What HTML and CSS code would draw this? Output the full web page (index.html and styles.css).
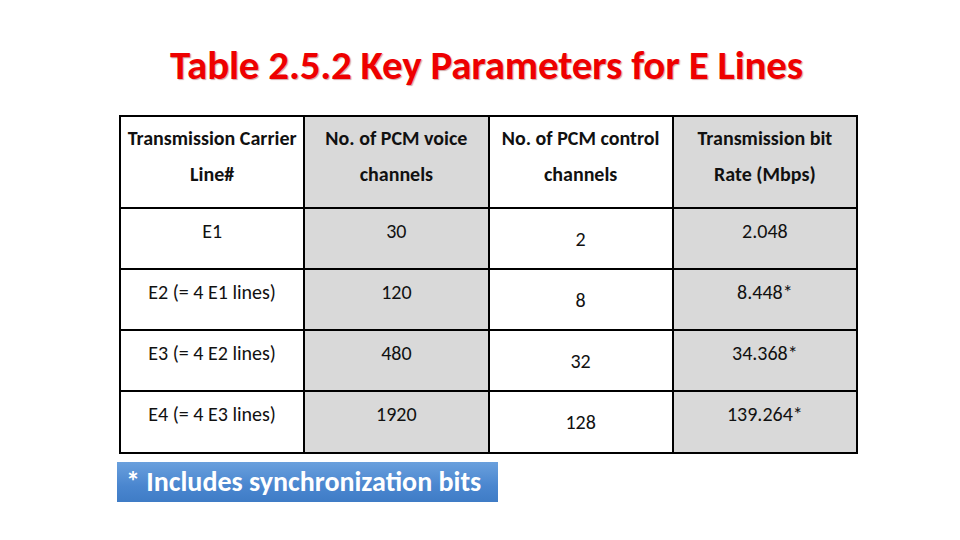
FILE: index.html
```html
<!DOCTYPE html>
<html>
<head>
<meta charset="utf-8">
<link rel="stylesheet" href="styles.css">
</head>
<body>
<div class="slide">
  <h1 class="title">Table 2.5.2 Key Parameters for E Lines</h1>
  <table class="params">
    <thead>
      <tr>
        <th>Transmission Carrier<br>Line#</th>
        <th class="gray">No. of PCM voice<br>channels</th>
        <th>No. of PCM control<br>channels</th>
        <th class="gray">Transmission bit<br>Rate (Mbps)</th>
      </tr>
    </thead>
    <tbody>
      <tr><td>E1</td><td class="gray">30</td><td class="mid">2</td><td class="gray">2.048</td></tr>
      <tr><td>E2 (= 4 E1 lines)</td><td class="gray">120</td><td class="mid">8</td><td class="gray">8.448*</td></tr>
      <tr><td>E3 (= 4 E2 lines)</td><td class="gray">480</td><td class="mid">32</td><td class="gray">34.368*</td></tr>
      <tr class="last"><td>E4 (= 4 E3 lines)</td><td class="gray">1920</td><td class="mid">128</td><td class="gray">139.264*</td></tr>
    </tbody>
  </table>
  <div class="note">* Includes synchronization bits</div>
</div>
</body>
</html>
```
FILE: styles.css
```css
html, body {
  margin: 0;
  padding: 0;
  background: #ffffff;
}
.slide {
  width: 960px;
  height: 540px;
  box-sizing: border-box;
  padding: 44px 0 0 117px;
  font-family: "Carlito", "Lato", "Liberation Sans", sans-serif;
  color: #111;
}
.title {
  margin: 0 0 29px 0;
  width: 739px;
  text-align: center;
  font-size: 41px;
  line-height: 42px;
  font-weight: bold;
  color: #ee0000;
  text-shadow: 1px 1px 1px rgba(120, 0, 0, 0.35);
  letter-spacing: -0.2px;
}
.params {
  margin-left: 2px;
  border-collapse: collapse;
  width: 739px;
  table-layout: fixed;
  border: 2px solid #000;
}
.params th, .params td {
  border: 2px solid #000;
  text-align: center;
  padding: 0;
  font-size: 20px;
}
.params th {
  height: 92px;
  font-weight: bold;
  line-height: 36px;
  vertical-align: middle;
  padding-bottom: 13px;
  box-sizing: border-box;
}
.params td {
  height: 61px;
  vertical-align: top;
  padding-top: 10px;
  box-sizing: border-box;
  line-height: 24px;
}
.params tr.last td {
  height: 62px;
}
.params td.mid {
  vertical-align: middle;
  padding-top: 0;
}
.gray {
  background: #d9d9d9;
}
.note {
  margin-top: 8px;
  width: 381px;
  height: 40px;
  box-sizing: border-box;
  background: linear-gradient(#6aa0dd, #4a86cf 60%, #3f7cc6);
  color: #ffffff;
  font-weight: bold;
  font-size: 28px;
  line-height: 40px;
  padding-left: 9px;
  white-space: nowrap;
}
```
